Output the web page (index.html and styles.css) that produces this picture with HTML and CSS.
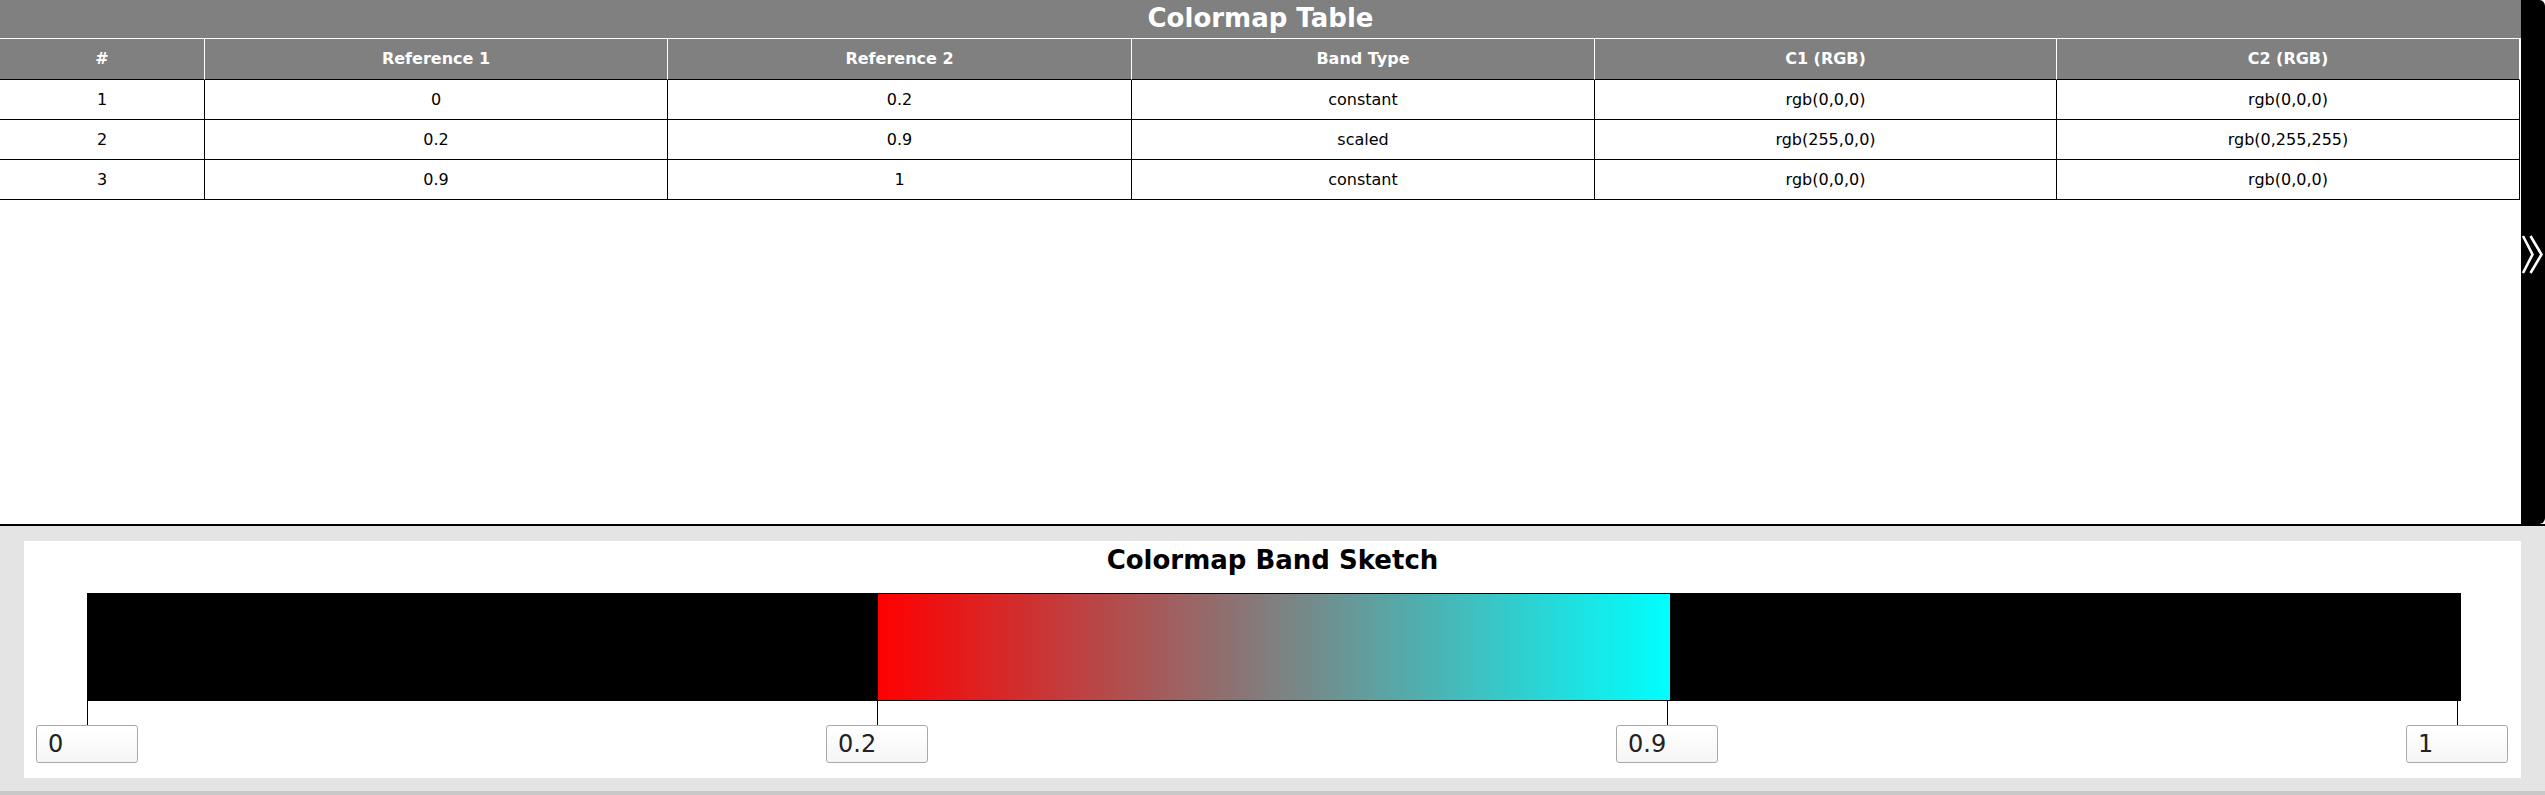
FILE: index.html
```html
<!DOCTYPE html>
<html lang="en">
<head>
<meta charset="utf-8">
<title>Colormap</title>
<link rel="stylesheet" href="styles.css">
</head>
<body>
<div class="app">
  <section class="table-panel">
    <div class="table-area">
      <h1 class="panel-title">Colormap Table</h1>
      <table class="cmap-table">
        <colgroup>
          <col class="c-idx">
          <col class="c-a">
          <col class="c-b">
          <col class="c-a">
          <col class="c-c">
          <col class="c-a">
        </colgroup>
        <thead>
          <tr><th>#</th><th>Reference 1</th><th>Reference 2</th><th>Band Type</th><th>C1 (RGB)</th><th>C2 (RGB)</th></tr>
        </thead>
        <tbody>
          <tr><td>1</td><td>0</td><td>0.2</td><td>constant</td><td>rgb(0,0,0)</td><td>rgb(0,0,0)</td></tr>
          <tr><td>2</td><td>0.2</td><td>0.9</td><td>scaled</td><td>rgb(255,0,0)</td><td>rgb(0,255,255)</td></tr>
          <tr><td>3</td><td>0.9</td><td>1</td><td>constant</td><td>rgb(0,0,0)</td><td>rgb(0,0,0)</td></tr>
        </tbody>
      </table>
    </div>
    <button class="side-toggle" type="button" aria-label="Expand">
      <svg class="chevrons" width="24" height="42" viewBox="0 0 24 42" aria-hidden="true">
        <polyline points="2,2 11.5,20.5 2,39" fill="none" stroke="#fff" stroke-width="2.6"/>
        <polyline points="9.5,2 20.5,20.5 9.5,39" fill="none" stroke="#fff" stroke-width="2.6"/>
      </svg>
    </button>
  </section>
  <section class="sketch-panel">
    <div class="sketch-card">
      <h2 class="sketch-title">Colormap Band Sketch</h2>
      <div class="band-bar">
        <div class="band" style="background: rgb(0,0,0)"></div>
        <div class="band" style="background: linear-gradient(to right, rgb(255,0,0), rgb(0,255,255))"></div>
        <div class="band" style="background: rgb(0,0,0)"></div>
      </div>
      <div class="axis">
        <div class="stop" style="left: 0%"><span class="tick"></span><input class="stop-input" type="text" value="0"></div>
        <div class="stop" style="left: 33.3333%"><span class="tick"></span><input class="stop-input" type="text" value="0.2"></div>
        <div class="stop" style="left: 66.6667%"><span class="tick"></span><input class="stop-input" type="text" value="0.9"></div>
        <div class="stop" style="left: 100%"><span class="tick"></span><input class="stop-input" type="text" value="1"></div>
      </div>
    </div>
  </section>
  <div class="bottom-edge"></div>
</div>
</body>
</html>
```
FILE: styles.css
```css
* { box-sizing: border-box; }

html, body {
  margin: 0;
  padding: 0;
  background: #ffffff;
  font-family: "DejaVu Sans", "Noto Sans", sans-serif;
  overflow: hidden;
}

.app {
  display: flex;
  flex-direction: column;
  width: 2545px;
  height: 795px;
}

/* ---------- top table panel ---------- */
.table-panel {
  display: flex;
  height: 526px;
  border-bottom: 2px solid #000;
  background: #fff;
}

.table-area {
  flex: 1;
  min-width: 0;
}

.panel-title {
  margin: 0;
  height: 38px;
  line-height: 37px;
  background: #808080;
  color: #fff;
  font-size: 26px;
  font-weight: bold;
  text-align: center;
}

.cmap-table {
  table-layout: fixed;
  border-collapse: separate;
  border-spacing: 0;
  width: 2520px;
  font-size: 16px;
}

.c-idx { width: 205px; }
.c-a { width: 463px; }
.c-b { width: 464px; }
.c-c { width: 462px; }

.cmap-table th {
  background: #808080;
  color: #fff;
  font-weight: bold;
  text-align: center;
  padding: 10px 8px;
  line-height: 20px;
  border-top: 1px solid #fff;
  border-right: 1px solid #fff;
  border-bottom: 1px solid #000;
}

.cmap-table td {
  color: #000;
  text-align: center;
  padding: 10px 8px;
  line-height: 19px;
  border-right: 1px solid #000;
  border-bottom: 1px solid #000;
}

.side-toggle {
  width: 24px;
  height: 524px;
  margin: 0;
  padding: 234px 0 0 0;
  border: 0;
  background: #000;
  border-radius: 0 6px 6px 0;
  display: flex;
  flex-direction: column;
  align-items: flex-start;
  cursor: pointer;
}

.chevrons { display: block; }

/* ---------- bottom sketch panel ---------- */
.sketch-panel {
  background: #e4e4e4;
  padding: 15px 24px 13px 24px;
}

.sketch-card {
  background: #fff;
  padding: 4px 0 15px 0;
}

.sketch-title {
  margin: 0;
  font-size: 26px;
  line-height: 30px;
  font-weight: bold;
  color: #000;
  text-align: center;
}

.band-bar {
  display: flex;
  height: 108px;
  margin: 18px 60px 0 63px;
}

.band {
  flex: 1;
  border-top: 1px solid #000;
  border-bottom: 1px solid #000;
}

.axis {
  position: relative;
  height: 62px;
  margin: 0 64px 0 63px;
}

.stop {
  position: absolute;
  top: 0;
  width: 102px;
  margin-left: -51px;
  display: flex;
  flex-direction: column;
  align-items: center;
}

.tick {
  display: block;
  width: 1px;
  height: 24px;
  background: #000;
  margin-left: 1px;
}

.stop-input {
  width: 102px;
  height: 38px;
  margin: 0;
  padding: 0 0 0 11px;
  border: 1px solid #a9a9a9;
  border-radius: 3px;
  background: linear-gradient(#ffffff, #f6f6f6);
  font-family: "DejaVu Sans", sans-serif;
  font-size: 24px;
  color: #222;
  outline: none;
}

.bottom-edge {
  height: 4px;
  background: #c8c8c8;
}
```
